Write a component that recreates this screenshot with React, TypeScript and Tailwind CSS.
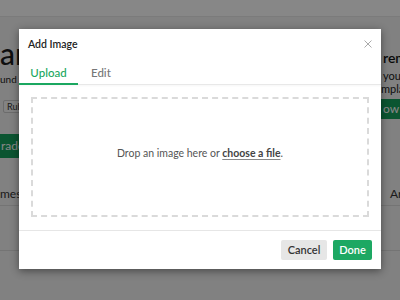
import { useState } from "react";

const font = { fontFamily: '"Lato", "Open Sans", sans-serif' };

function BackgroundPage() {
  return (
    <div className="flex h-[300px] w-[400px] flex-col overflow-hidden bg-[#f3f3f3]">
      <div className="h-[17px] shrink-0 border-b border-[#e8e8e8] bg-white" />
      <div className="flex h-[166px] shrink-0">
        {/* left column, mostly covered by the modal */}
        <div className="flex w-[381px] shrink-0 flex-col items-start pt-[18px]">
          <span className="whitespace-nowrap text-[30px] leading-[36px] font-medium text-[#1e1e1e]">
            ar
          </span>
          <span className="mt-[2px] whitespace-nowrap text-[10px] leading-[12px] text-[#222]">
            und
          </span>
          <span className="mt-[15px] ml-[3px] h-[13px] w-[24px] whitespace-nowrap rounded-[2px] border border-[#ccc] bg-[#f7f7f7] px-[3px] text-[9px] leading-[11px] text-[#333]">
            Rub
          </span>
          <span className="mt-[21px] flex h-[24px] w-[40px] items-center whitespace-nowrap bg-[#15a15e] pl-px text-[12px] text-white">
            rade
          </span>
        </div>
        {/* right column, cut by the window edge */}
        <div className="flex shrink-0 flex-col items-start pt-[32px]">
          <span className="whitespace-nowrap pl-[2px] text-[14px] leading-[18px] font-semibold text-[#111]">
            rem
          </span>
          <span className="mt-[2px] whitespace-nowrap pl-[2px] text-[11px] leading-[13px] text-[#222]">
            you
          </span>
          <span className="whitespace-nowrap text-[11px] leading-[13px] text-[#222]">
            mpla
          </span>
          <span className="mt-[4px] flex h-[20px] w-[30px] items-center whitespace-nowrap bg-[#15a15e] pl-[2px] text-[12px] text-white">
            ow
          </span>
        </div>
      </div>
      <div className="flex h-[23px] shrink-0 items-center border-b border-[#dcdcdc] text-[12px] text-[#333]">
        <span className="w-[390px] shrink-0 whitespace-nowrap">mes</span>
        <span className="shrink-0 whitespace-nowrap">Ar</span>
      </div>
      <div className="h-[45px] shrink-0 border-b border-[#dcdcdc]" />
    </div>
  );
}

export default function App() {
  const [tab, setTab] = useState<"upload" | "edit">("upload");

  return (
    <div className="relative h-[300px] w-[400px] overflow-hidden" style={font}>
      <BackgroundPage />
      {/* overlay */}
      <div className="absolute inset-0 flex items-start justify-center bg-black/[0.47] pt-[29px]">
        <div className="flex h-[240px] w-[362px] flex-col bg-white shadow-[0_2px_8px_rgba(0,0,0,0.45)]">
          {/* header */}
          <header className="flex h-[29px] shrink-0 items-start justify-between pt-[8px] pl-[9px] pr-[9px]">
            <span className="text-[10.5px] leading-[14px] font-semibold text-[#222]">
              Add Image
            </span>
            <button className="mt-[3px] text-[#aaa]">
              <svg width="8" height="8" viewBox="0 0 8 8">
                <path d="M0.5 0.5L7.5 7.5M7.5 0.5L0.5 7.5" stroke="currentColor" strokeWidth="1" />
              </svg>
            </button>
          </header>
          {/* tabs */}
          <div className="flex h-[27px] shrink-0 border-b border-[#e8e8e8] shadow-[0_1px_2px_rgba(0,0,0,0.04)]">
            <button
              onClick={() => setTab("upload")}
              className={`${tab === "upload" ? "border-[#1aa760] text-[#1aa760]" : "border-transparent text-[#777]"} -mb-px h-[27px] w-[59px] border-b-2 pt-[4px] text-[11.5px] leading-[16px] font-medium`}
            >
              Upload
            </button>
            <button
              onClick={() => setTab("edit")}
              className={`${tab === "edit" ? "border-[#1aa760] text-[#1aa760]" : "border-transparent text-[#777]"} -mb-px h-[27px] border-b-2 pl-[13px] pr-[13px] pt-[4px] text-[11.5px] leading-[16px] font-medium`}
            >
              Edit
            </button>
          </div>
          {/* body */}
          <div className="flex h-[145px] shrink-0 px-[12px] pt-[12px] pb-[13px]">
            <div className="flex flex-1 items-center justify-center border-2 border-dashed border-[#dadada] pb-[6px] text-[10.5px] text-[#555]">
              <span>
                Drop an image here or{" "}
                <span className="font-bold text-[#444] underline decoration-[#888] underline-offset-2">
                  choose a file
                </span>
                .
              </span>
            </div>
          </div>
          {/* footer */}
          <footer className="flex flex-1 items-start justify-end gap-[6px] border-t border-[#e6e6e6] pt-[9px] pr-[9px]">
            <button className="h-[20px] w-[46px] rounded-[2px] bg-[#e6e6e6] text-[11px] font-semibold text-[#333]">
              Cancel
            </button>
            <button className="h-[20px] w-[39px] rounded-[2px] bg-[#1da863] text-[11px] font-semibold text-white">
              Done
            </button>
          </footer>
        </div>
      </div>
    </div>
  );
}
